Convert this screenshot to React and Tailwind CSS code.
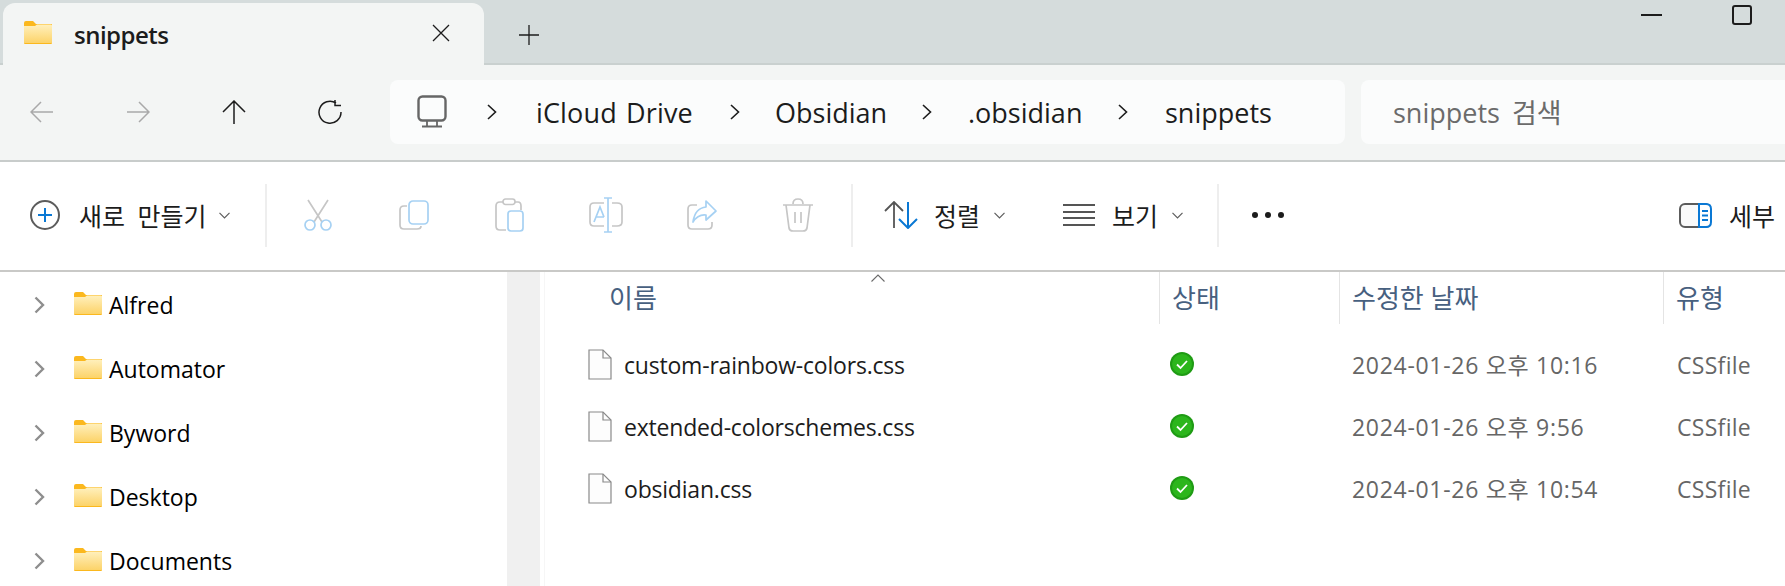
import React from "react";

function Folder({ className = "" }) {
  return (
    <svg className={className} width="28" height="23" viewBox="0 0 28 23">
      <defs>
        <linearGradient id="fg" x1="0" y1="0" x2="0" y2="1">
          <stop offset="0" stopColor="#fff0bd" />
          <stop offset="1" stopColor="#fcd369" />
        </linearGradient>
      </defs>
      <path d="M0 2 Q0 0 2 0 H9 L12 3 H28 V22 Q28 23 27 23 H1 Q0 23 0 22Z" fill="#fbb81e" />
      <path d="M0 5 H11 L13 3.5 H27 Q28 3.5 28 4.5 V21.5 Q28 22 27 22 H1 Q0 22 0 21.5Z" fill="url(#fg)" />
    </svg>
  );
}

function Arrow({ d, color }) {
  return (
    <svg width="24" height="24" viewBox="0 0 24 24" fill="none" stroke={color} strokeWidth="1.5">
      <path d={d} />
    </svg>
  );
}

function Chevron() {
  return (
    <svg width="12" height="18" viewBox="0 0 12 18" fill="none" stroke="#1c1c1c" strokeWidth="1.6">
      <path d="M2 2 L9.5 9 L2 16" />
    </svg>
  );
}

function Caret({ className = "" }) {
  return (
    <svg className={className} width="11" height="7" viewBox="0 0 11 7" fill="none" stroke="#5d5d5d" strokeWidth="1.2">
      <path d="M0.5 0.8 L5.5 5.8 L10.5 0.8" />
    </svg>
  );
}

const G = "#c6c6c6";
const B = "#a6d1f3";

function CutIcon() {
  return (
    <svg width="30" height="32" viewBox="0 0 30 32" fill="none" strokeWidth="1.7">
      <path d="M5 1 L19 23 M25 1 L11 23" stroke={G} />
      <circle cx="7" cy="26" r="5" stroke={B} />
      <circle cx="23" cy="26" r="5" stroke={B} />
    </svg>
  );
}
function CopyIcon() {
  return (
    <svg width="30" height="30" viewBox="0 0 30 30" fill="none" strokeWidth="1.7">
      <path d="M8 6 H5 Q1 6 1 10 V25 Q1 29 5 29 H18 Q22 29 22 26" stroke={G} />
      <rect x="10" y="1" width="19" height="23" rx="4" stroke={B} />
    </svg>
  );
}
function PasteIcon() {
  return (
    <svg width="30" height="34" viewBox="0 0 30 34" fill="none" strokeWidth="1.7">
      <path d="M8 4 H5 Q1 4 1 8 V28 Q1 32 5 32 H11 M20 4 H23 Q26 4 26 8 V12" stroke={G} />
      <rect x="8" y="1" width="12" height="5.5" rx="2.5" stroke={G} />
      <rect x="13" y="13" width="15" height="20" rx="3" stroke={B} />
    </svg>
  );
}
function RenameIcon() {
  return (
    <svg width="34" height="36" viewBox="0 0 34 36" fill="none" strokeWidth="1.7">
      <path d="M15 6 H5 Q1 6 1 10 V25 Q1 29 5 29 H15 M23 6 H28 Q33 6 33 10 V25 Q33 29 28 29 H23" stroke={G} />
      <path d="M15 1 H23 M19 1 V35 M15 35 H23" stroke={B} />
      <path d="M5 25 L11 10 L15 20 M7 20 H15" stroke={B} />
    </svg>
  );
}
function ShareIcon() {
  return (
    <svg width="30" height="32" viewBox="0 0 30 32" fill="none" strokeWidth="1.7">
      <path d="M10 6 H5 Q1 6 1 10 V26 Q1 30 5 30 H21 Q25 30 25 26 V23" stroke={G} />
      <path d="M19 2 L29 12 L19 21 V16 Q11 15 6 23 Q8 9 19 8 Z" stroke={B} strokeLinejoin="round" />
    </svg>
  );
}
function TrashIcon() {
  return (
    <svg width="30" height="34" viewBox="0 0 30 34" fill="none" stroke={G} strokeWidth="1.7">
      <path d="M0 7 H30 M10 6 Q10 1 15 1 Q20 1 20 6 M3 7 L6 30 Q6.5 33 10 33 H20 Q23.5 33 24 30 L27 7 M12 14 V25 M18 14 V25" />
    </svg>
  );
}

function Slot({ children }) {
  return <div className="w-[96px] flex items-center justify-center">{children}</div>;
}

function Sep({ className = "" }) {
  return <div className={"w-[2px] h-[63px] bg-[#eeeeee] " + className} />;
}

const sidebar = ["Alfred", "Automator", "Byword", "Desktop", "Documents"];
const files = [
  ["custom-rainbow-colors.css", "2024-01-26 오후 10:16"],
  ["extended-colorschemes.css", "2024-01-26 오후 9:56"],
  ["obsidian.css", "2024-01-26 오후 10:54"],
];

function FileIcon() {
  return (
    <svg width="24" height="31" viewBox="0 0 24 31" fill="none" stroke="#8a8a8a" strokeWidth="1.2">
      <path d="M1 1 H15 L23 9 V30 H1 Z" fill="#fdfdfd" />
      <path d="M15 1 V9 H23" />
    </svg>
  );
}

function Check() {
  return (
    <svg width="24" height="24" viewBox="0 0 24 24">
      <circle cx="12" cy="12" r="12" fill="#1f9b14" />
      <circle cx="12" cy="12" r="10" fill="#2cb61c" />
      <path d="M7 12.5 L10.5 16 L17 9" fill="none" stroke="#ffffff" strokeWidth="1.8" />
    </svg>
  );
}

export default function App() {
  return (
    <div className="w-[1785px] h-[586px] overflow-hidden bg-white flex flex-col font-['Open_Sans','Noto_Sans_CJK_KR',sans-serif] text-[#1c1c1c]">
      {/* tab strip */}
      <div className="h-[65px] shrink-0 bg-[#d5dcdc] border-b-2 border-[#c9d0cf] flex pl-[3px]">
        <div className="w-[481px] h-[62px] mt-[3px] -mb-[2px] bg-[#f3f5f4] rounded-t-[12px] flex items-center pl-[21px] pb-[3px]">
          <Folder />
          <span className="ml-[22px] mt-[4px] text-[24px] font-semibold tracking-[-0.5px]">snippets</span>
          <svg className="ml-auto mr-[34px]" width="18" height="18" viewBox="0 0 18 18" fill="none" stroke="#1c1c1c" strokeWidth="1.3">
            <path d="M1 1 L17 17 M17 1 L1 17" />
          </svg>
        </div>
        <div className="ml-[35px] mt-[25px] h-[20px]">
          <svg width="20" height="20" viewBox="0 0 20 20" fill="none" stroke="#1c1c1c" strokeWidth="1.3">
            <path d="M10 0 V20 M0 10 H20" />
          </svg>
        </div>
        <div className="ml-auto flex items-start">
          <div className="w-[21px] h-[2px] bg-[#1c1c1c] mt-[14px]" />
          <div className="w-[20px] h-[20px] mt-[5px] ml-[70px] mr-[33px] border-2 border-[#1c1c1c] rounded-[3px]" />
        </div>
      </div>

      {/* nav row */}
      <div className="h-[97px] shrink-0 bg-[#f3f5f4] border-b-2 border-[#c8cccb] flex items-center pl-[30px] pb-[2px]">
        <div className="flex items-center gap-[72px]">
          <Arrow color="#a9a9a9" d="M23 12 H1 M11 2 L1 12 L11 22" />
          <Arrow color="#a9a9a9" d="M1 12 H23 M13 2 L23 12 L13 22" />
          <Arrow color="#1c1c1c" d="M12 24 V1 M1 12 L12 1 L23 12" />
          <Arrow color="#1c1c1c" d="M18 3 A11 11 0 1 0 23 12 M17 0 V5.5 H23" />
        </div>
        <div className="ml-[48px] w-[955px] h-[64px] rounded-[8px] bg-[#fbfcfc] flex items-center text-[27px] pl-[27px]">
          <svg width="30" height="33" viewBox="0 0 30 33" fill="none" stroke="#666666" strokeWidth="2.4">
            <rect x="1.5" y="1.5" width="27" height="24" rx="4" />
            <path d="M10 26 V31 M20 26 V31 M5 31.5 H25" strokeWidth="1.8" />
          </svg>
          <span className="ml-[39px]"><Chevron /></span>
          <span className="ml-[38px] mt-[4px] w-[156px] whitespace-nowrap tracking-[0.15px] [word-spacing:2px]">iCloud Drive</span>
          <span className="ml-[37px]"><Chevron /></span>
          <span className="ml-[34px] mt-[4px] w-[111px] whitespace-nowrap">Obsidian</span>
          <span className="ml-[35px]"><Chevron /></span>
          <span className="ml-[35px] mt-[4px] w-[111px] whitespace-nowrap">.obsidian</span>
          <span className="ml-[38px]"><Chevron /></span>
          <span className="ml-[36px] mt-[4px] whitespace-nowrap">snippets</span>
        </div>
        <div className="ml-[16px] flex-1 h-[64px] rounded-l-[8px] bg-[#fbfcfc] flex items-center pl-[32px] pt-[4px] text-[27px] text-[#6b6b6b] whitespace-nowrap [word-spacing:5px]">
          snippets 검색
        </div>
      </div>

      {/* toolbar */}
      <div className="h-[110px] shrink-0 bg-white border-b-2 border-[#c9c9c7] flex items-center pl-[30px] pb-[2px] text-[25px]">
        <div className="w-[30px] h-[30px] rounded-full border-2 border-[#5c5c5c] flex items-center justify-center shrink-0">
          <svg width="14" height="14" viewBox="0 0 14 14" stroke="#0a78d4" strokeWidth="2"><path d="M7 0 V14 M0 7 H14" /></svg>
        </div>
        <span className="ml-[19px] mt-[3px] w-[125px] whitespace-nowrap [word-spacing:6px]">새로 만들기</span>
        <Caret className="ml-[15px]" />
        <Sep className="ml-[35px]" />
        <div className="flex ml-[3px]">
          <Slot><CutIcon /></Slot>
          <Slot><CopyIcon /></Slot>
          <Slot><PasteIcon /></Slot>
          <Slot><RenameIcon /></Slot>
          <Slot><ShareIcon /></Slot>
          <Slot><TrashIcon /></Slot>
        </div>
        <Sep className="ml-[5px]" />
        <svg className="ml-[31px]" width="34" height="28" viewBox="0 0 34 28" fill="none" strokeWidth="2">
          <path d="M1 10 L10 1 L19 10 M10 1 V27" stroke="#555555" strokeWidth="1.8" />
          <path d="M15 18 L24 27 L33 18 M24 1 V27" stroke="#0a78d4" />
        </svg>
        <span className="ml-[16px] mt-[3px] w-[46px] whitespace-nowrap">정렬</span>
        <Caret className="ml-[14px]" />
        <svg className="ml-[58px]" width="32" height="24" viewBox="0 0 32 24" stroke="#555555" strokeWidth="1.8">
          <path d="M0 2 H32 M0 9 H32 M0 15 H32 M0 22 H32" />
        </svg>
        <span className="ml-[17px] mt-[3px] w-[43px] whitespace-nowrap">보기</span>
        <Caret className="ml-[17px]" />
        <Sep className="ml-[34px]" />
        <div className="ml-[33px] flex gap-[7px]">
          <div className="w-[6px] h-[6px] rounded-full bg-[#1c1c1c]" />
          <div className="w-[6px] h-[6px] rounded-full bg-[#1c1c1c]" />
          <div className="w-[6px] h-[6px] rounded-full bg-[#1c1c1c]" />
        </div>
        <svg className="ml-[395px]" width="33" height="25" viewBox="0 0 33 25" fill="none">
          <rect x="1" y="1" width="30" height="23" rx="5" fill="#fafafa" stroke="#5c5c5c" strokeWidth="2" />
          <path d="M20 1 H27 Q32 1 32 6 V19 Q32 24 27 24 H20 Z" fill="#ffffff" stroke="#0a78d4" strokeWidth="2" />
          <path d="M23 8 H29 M23 12.5 H29 M23 17 H29" stroke="#0a78d4" strokeWidth="2" />
        </svg>
        <span className="ml-[17px] mt-[3px] whitespace-nowrap">세부</span>
      </div>

      {/* body */}
      <div className="flex-1 min-h-0 flex">
        <div className="w-[507px] shrink-0 text-[23px] text-black">
          {sidebar.map((name) => (
            <div key={name} className="h-[64px] flex items-center pl-[34px] pt-[2px]">
              <svg width="11" height="18" viewBox="0 0 11 18" fill="none" stroke="#8e8e8e" strokeWidth="2.4">
                <path d="M1.5 1.5 L9 9 L1.5 16.5" />
              </svg>
              <Folder className="ml-[29px] -mt-[3px]" />
              <span className="ml-[7px] whitespace-nowrap">{name}</span>
            </div>
          ))}
        </div>
        <div className="w-[33px] shrink-0 bg-[#f0f0f0]" />
        <div className="ml-[4px] flex-1 border-l border-[#f6f6f6] relative">
          <svg className="absolute left-[326px] top-[2px]" width="14" height="8" viewBox="0 0 14 8" fill="none" stroke="#6a6a6a" strokeWidth="1.1">
            <path d="M0.5 7.5 L7 1 L13.5 7.5" />
          </svg>
          <div className="h-[52px] flex text-[26px] text-[#47607f]">
            <div className="w-[614px] flex items-center pl-[64px] pt-[1px]">이름</div>
            <div className="w-[180px] flex items-center pl-[12px] pt-[1px] border-l border-[#e4e4e4]">상태</div>
            <div className="w-[324px] flex items-center pl-[12px] pt-[1px] border-l border-[#e4e4e4]">수정한 날짜</div>
            <div className="flex-1 flex items-center pl-[12px] pt-[1px] border-l border-[#e4e4e4]">유형</div>
          </div>
          <div className="pt-[9px] text-[23px]">
            {files.map(([name, date]) => (
              <div key={name} className="h-[62px] flex items-center">
                <div className="w-[615px] flex items-center pl-[43px]">
                  <FileIcon />
                  <span className="ml-[12px] mt-[2px] text-[#1c1c1c] tracking-[-0.2px] whitespace-nowrap">{name}</span>
                </div>
                <div className="w-[180px] pl-[10px]"><Check /></div>
                <div className="w-[324px] pl-[12px] mt-[2px] text-[#666666] tracking-[0.7px] whitespace-nowrap">{date}</div>
                <div className="pl-[13px] mt-[2px] text-[#666666] tracking-[0.3px]">CSSfile</div>
              </div>
            ))}
          </div>
        </div>
      </div>
    </div>
  );
}
